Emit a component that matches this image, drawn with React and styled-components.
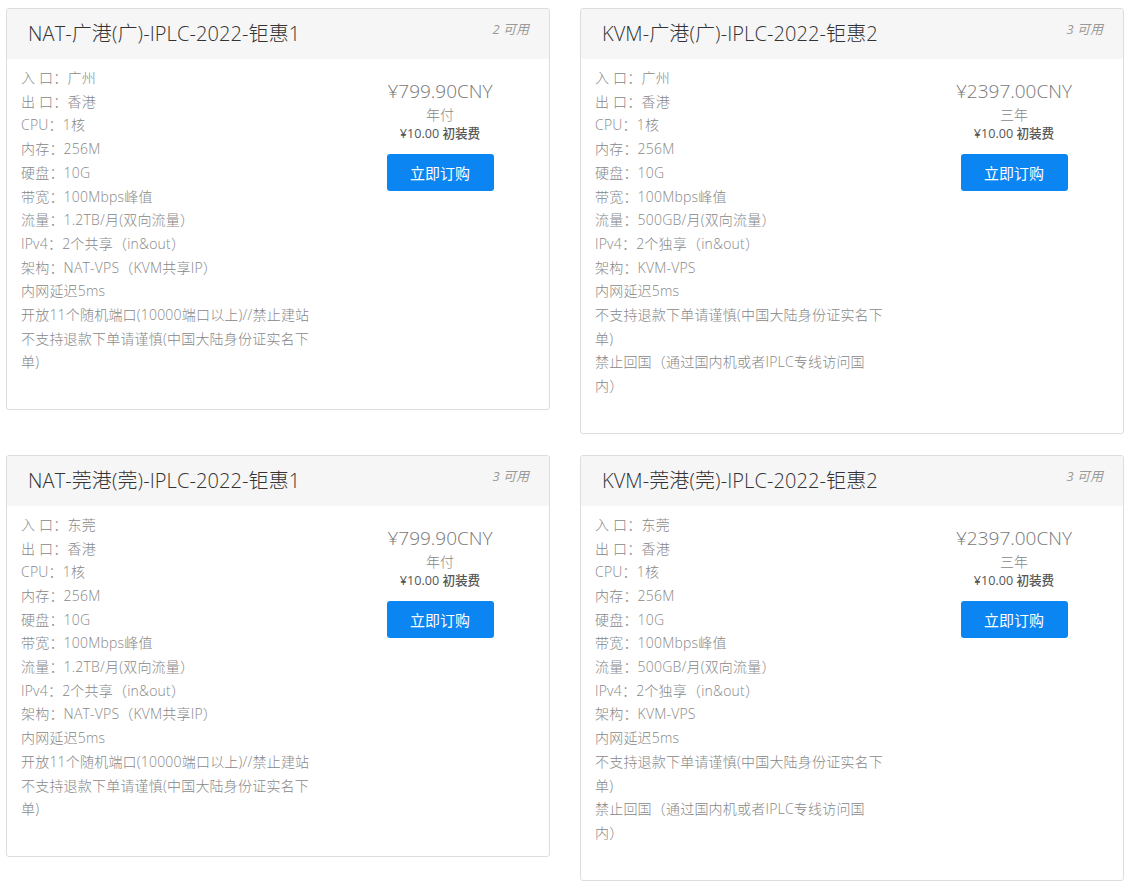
import React from "react";
import styled, { createGlobalStyle } from "styled-components";

const Global = createGlobalStyle`
  html, body { margin: 0; padding: 0; background: #fff; }
  body {
    font-family: "Open Sans", "Noto Sans CJK SC", sans-serif;
    color: #777;
  }
  * { box-sizing: border-box; }
`;

const Page = styled.div`
  display: grid;
  grid-template-columns: 544px 544px;
  column-gap: 30px;
  row-gap: 21px;
  align-items: start;
  padding: 8px 9px 10px 6px;
`;

const Card = styled.div`
  border: 1px solid #dddddd;
  border-radius: 3px;
  background: #fff;
  overflow: hidden;
`;

const Header = styled.div`
  position: relative;
  background: #f6f6f6;
  height: 50px;
  display: flex;
  align-items: center;
  padding: 0 21px 3px;
`;

const Title = styled.h3`
  margin: 0;
  font-size: 20px;
  font-weight: 300;
  color: #333;
  letter-spacing: 0.1px;
`;

const Qty = styled.span`
  position: absolute;
  right: 20px;
  top: 10px;
  font-size: 13px;
  font-style: italic;
  color: #999;
`;

const Body = styled.div`
  display: flex;
  justify-content: space-between;
  align-items: flex-start;
  padding: 7px 9px 35px 14px;
`;

const Features = styled.ul`
  list-style: none;
  margin: 0;
  padding: 0;
  width: 292px;
  font-size: 14px;
  line-height: 23.7px;
  color: #888;
  font-weight: 300;
  letter-spacing: 0.2px;
`;

const Feature = styled.li`
  margin: 0;
  white-space: pre-line;
`;

const PriceCol = styled.div`
  width: 200px;
  display: flex;
  flex-direction: column;
  align-items: center;
  padding-top: 13px;
`;

const Price = styled.div`
  font-size: 19px;
  font-weight: 300;
  color: #777;
  line-height: 24px;
`;

const Cycle = styled.div`
  font-size: 14px;
  color: #888;
  font-weight: 300;
  line-height: 20px;
  margin-top: 2px;
`;

const Setup = styled.div`
  font-size: 12.6px;
  color: #555;
  font-weight: 500;
  line-height: 18px;
`;

const OrderButton = styled.button`
  margin-top: 11px;
  width: 107px;
  height: 37px;
  border: none;
  border-radius: 3px;
  background: #0a85f1;
  color: #fff;
  font-family: "Open Sans", "Noto Sans CJK SC", sans-serif;
  font-size: 15px;
  cursor: pointer;
`;

const common = (city) => [
  `入 口：${city}`,
  "出 口：香港",
  "CPU：1核",
  "内存：256M",
  "硬盘：10G",
  "带宽：100Mbps峰值",
];

const natRest = [
  "流量：1.2TB/月(双向流量）",
  "IPv4：2个共享（in&out）",
  "架构：NAT-VPS（KVM共享IP）",
  "内网延迟5ms",
  "开放11个随机端口(10000端口以上)//禁止建站",
  "不支持退款下单请谨慎(中国大陆身份证实名下\n单)",
];

const kvmRest = [
  "流量：500GB/月(双向流量）",
  "IPv4：2个独享（in&out）",
  "架构：KVM-VPS",
  "内网延迟5ms",
  "不支持退款下单请谨慎(中国大陆身份证实名下\n单)",
  "禁止回国（通过国内机或者IPLC专线访问国\n内）",
];

const products = [
  {
    title: "NAT-广港(广)-IPLC-2022-钜惠1",
    qty: "2 可用",
    features: [...common("广州"), ...natRest],
    price: "¥799.90CNY",
    cycle: "年付",
  },
  {
    title: "KVM-广港(广)-IPLC-2022-钜惠2",
    qty: "3 可用",
    features: [...common("广州"), ...kvmRest],
    price: "¥2397.00CNY",
    cycle: "三年",
  },
  {
    title: "NAT-莞港(莞)-IPLC-2022-钜惠1",
    qty: "3 可用",
    features: [...common("东莞"), ...natRest],
    price: "¥799.90CNY",
    cycle: "年付",
  },
  {
    title: "KVM-莞港(莞)-IPLC-2022-钜惠2",
    qty: "3 可用",
    features: [...common("东莞"), ...kvmRest],
    price: "¥2397.00CNY",
    cycle: "三年",
  },
];

export default function App() {
  return (
    <>
      <Global />
      <Page>
        {products.map((p) => (
          <Card key={p.title}>
            <Header>
              <Title>{p.title}</Title>
              <Qty>{p.qty}</Qty>
            </Header>
            <Body>
              <Features>
                {p.features.map((f, i) => (
                  <Feature key={i}>{f}</Feature>
                ))}
              </Features>
              <PriceCol>
                <Price>{p.price}</Price>
                <Cycle>{p.cycle}</Cycle>
                <Setup>¥10.00 初装费</Setup>
                <OrderButton>立即订购</OrderButton>
              </PriceCol>
            </Body>
          </Card>
        ))}
      </Page>
    </>
  );
}
